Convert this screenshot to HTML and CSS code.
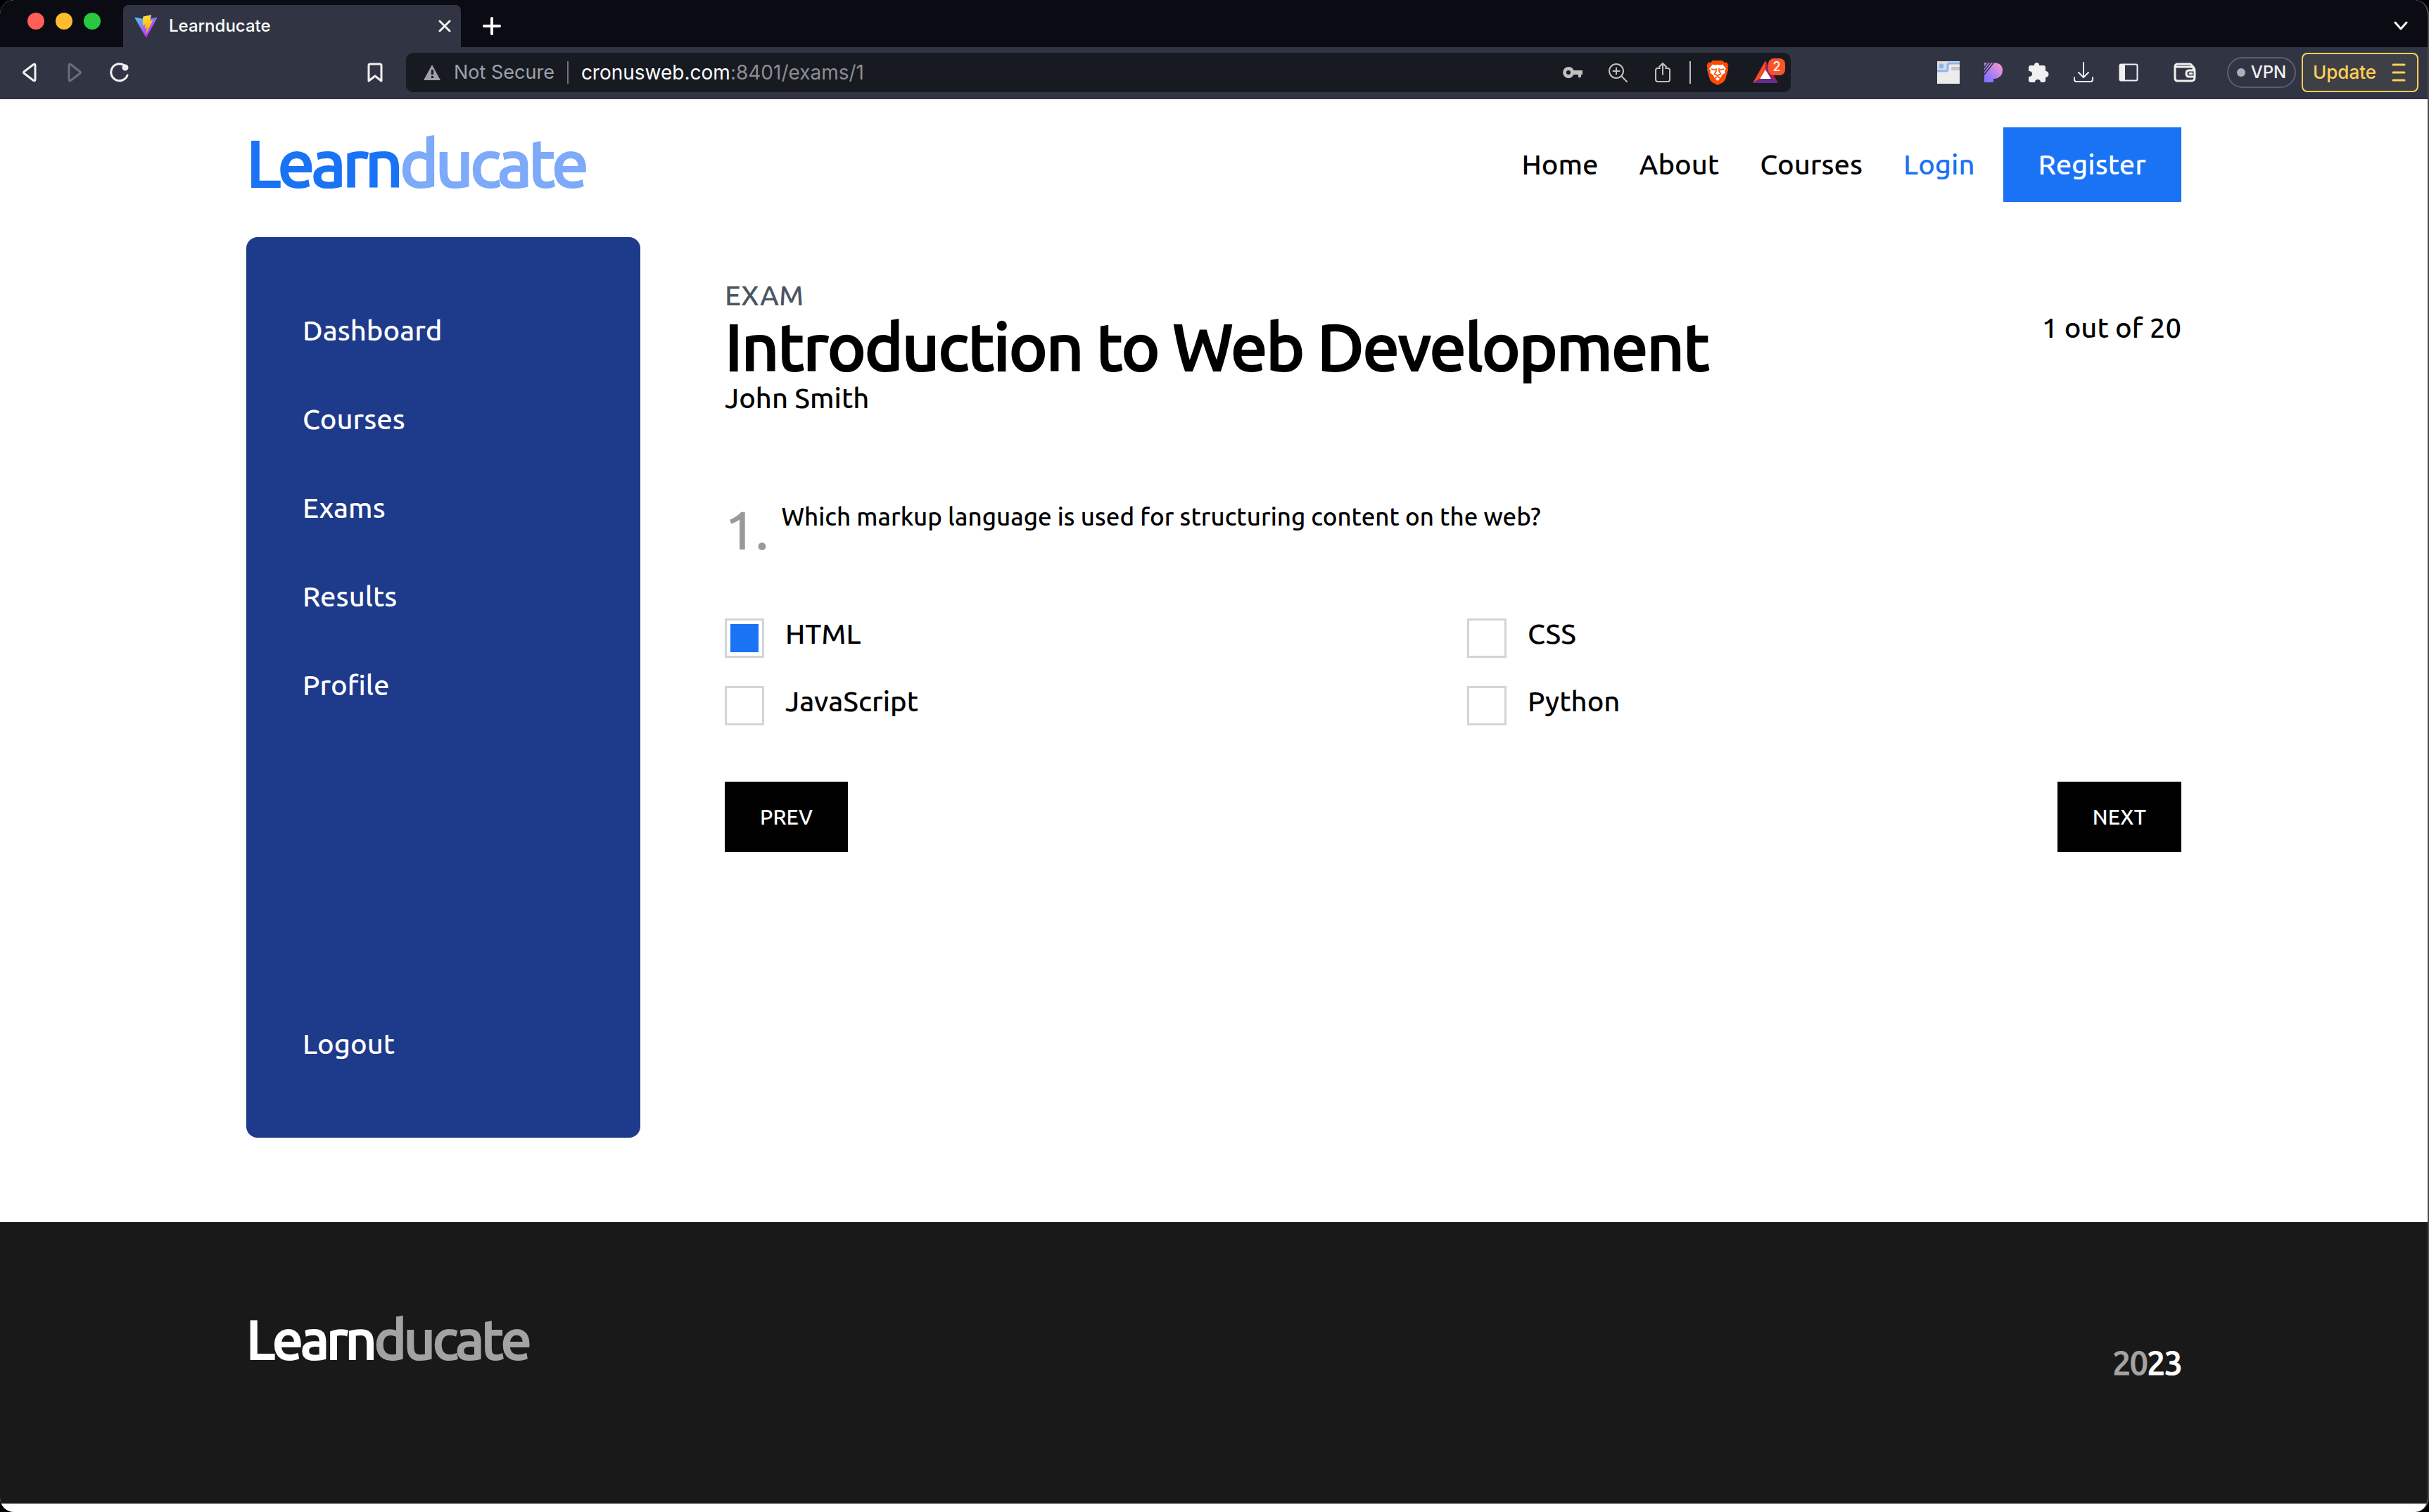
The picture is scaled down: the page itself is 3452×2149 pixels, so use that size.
FILE: index.html
```html
<!DOCTYPE html>
<html lang="en">
<head>
<meta charset="utf-8">
<meta name="viewport" content="width=device-width, initial-scale=1">
<title>Learnducate</title>
<link rel="stylesheet" href="styles.css">
</head>
<body>
<div class="window">
  <div class="browser">
    <div class="tabstrip">
      <div class="lights"><span class="light red"></span><span class="light amber"></span><span class="light green"></span></div>
      <div class="tab">
        <svg class="favicon" viewBox="0 0 410 404" aria-hidden="true">
          <defs>
            <linearGradient id="va" x1="6" y1="33" x2="235" y2="344" gradientUnits="userSpaceOnUse"><stop stop-color="#41D1FF"/><stop offset="1" stop-color="#BD34FE"/></linearGradient>
            <linearGradient id="vb" x1="194" y1="9" x2="236" y2="293" gradientUnits="userSpaceOnUse"><stop stop-color="#FFEA83"/><stop offset=".08" stop-color="#FFDD35"/><stop offset="1" stop-color="#FFA800"/></linearGradient>
          </defs>
          <path fill="url(#va)" d="M399.641 59.5246L215.643 388.545C211.844 395.338 202.084 395.378 198.228 388.618L10.5817 59.5563C6.38087 52.1896 12.6802 43.2665 21.0281 44.7586L205.223 77.6824C206.398 77.8924 207.601 77.8904 208.776 77.6763L389.119 44.8058C397.439 43.2894 403.768 52.1434 399.641 59.5246Z"/>
          <path fill="url(#vb)" d="M292.965 1.5744L156.801 28.2552C154.563 28.6937 152.906 30.5903 152.771 32.8664L144.395 174.33C144.198 177.662 147.258 180.248 150.51 179.498L188.42 170.749C191.967 169.931 195.172 173.055 194.443 176.622L183.18 231.775C182.422 235.487 185.907 238.661 189.532 237.56L212.947 230.446C216.577 229.344 220.065 232.527 219.297 236.242L201.398 322.875C200.278 328.294 207.486 331.249 210.492 326.603L212.5 323.5L323.454 102.072C325.312 98.3645 322.108 94.137 318.036 94.9228L279.014 102.454C275.347 103.161 272.227 99.746 273.262 96.1583L298.731 7.86689C299.767 4.27314 296.636 0.855181 292.965 1.5744Z"/>
        </svg>
        <span class="tab-title">Learnducate</span>
        <button class="icon-btn tab-close" aria-label="Close tab"><svg width="18" height="18" viewBox="0 0 18 18" class="line"><path d="M2 2l14 14M16 2L2 16"/></svg></button>
      </div>
      <button class="icon-btn new-tab" aria-label="New tab"><svg width="26" height="26" viewBox="0 0 26 26" class="line bold"><path d="M13 2v22M2 13h22"/></svg></button>
      <button class="icon-btn tab-list" aria-label="Search tabs"><svg width="20" height="14" viewBox="0 0 20 14" class="line"><path d="M2 2l8 9 8-9"/></svg></button>
    </div>

    <div class="toolbar">
      <div class="cells">
        <button class="icon-btn cell" aria-label="Back"><svg width="28" height="28" viewBox="0 0 28 28" class="line"><path d="M22 4v20q0 3-3 1L6 15q-1-1 0-2L19 3q3-2 3 1z"/></svg></button>
        <button class="icon-btn cell dim" aria-label="Forward"><svg width="28" height="28" viewBox="0 0 28 28" class="line"><path d="M6 4v20q0 3 3 1l13-10q1-1 0-2L9 3Q6 1 6 4z"/></svg></button>
        <button class="icon-btn cell" aria-label="Reload"><svg width="28" height="28" viewBox="0 0 28 28" class="line"><path d="M25 18A12 12 0 1 1 22 5"/><circle cx="22" cy="7" r="3" fill="currentColor"/></svg></button>
      </div>
      <button class="icon-btn cell bookmark" aria-label="Bookmark this page"><svg width="22" height="28" viewBox="0 0 22 28" class="line"><path d="M2 4q0-2 2-2h14q2 0 2 2v22l-9-7-9 7z"/></svg></button>

      <div class="address">
        <svg width="26" height="24" viewBox="0 0 26 24" fill="#9da1ab" aria-hidden="true"><path d="M13 1l12 22H1z"/><path fill="#171a21" d="M12 8h3v7h-3zM12 17h3v3h-3z"/></svg>
        <span class="security">Not Secure</span>
        <span class="rule"></span>
        <button class="url"><span class="host">cronusweb.com</span>:8401/exams/1</button>
        <div class="cells address-icons">
          <button class="icon-btn cell" aria-label="Passwords"><svg width="28" height="18" viewBox="0 0 28 18"><path fill="currentColor" fill-rule="evenodd" d="M8 1a8 8 0 1 0 7.500 11H22v4h4v-4h2V6H15.500A8 8 0 0 0 8 1zm0 5a3 3 0 1 1 0 6 3 3 0 0 1 0-6z"/></svg></button>
          <button class="icon-btn cell" aria-label="Zoom"><svg width="28" height="28" viewBox="0 0 28 28" class="line thin"><circle cx="12" cy="12" r="10"/><path d="M19 19l8 8M7.500 12h9M12 7.500v9"/></svg></button>
          <button class="icon-btn cell" aria-label="Share"><svg width="24" height="30" viewBox="0 0 24 30" class="line thin"><path d="M8 9H5q-3 0-3 3v13q0 3 3 3h14q3 0 3-3V12q0-3-3-3h-3M12 18V2M7 7l5-5 5 5"/></svg></button>
          <span class="rule short"></span>
          <button class="icon-btn cell" aria-label="Brave Shields"><svg width="32" height="36" viewBox="0 0 32 36"><path fill="#fb4c05" d="M9 1h14l3 3 3-.5 2.500 4.500-1 3 .500 3-4 14-3 4-8 4-8-4-3-4-4-14 .500-3-1-3L3 3.500 6 4z"/><path fill="#fff" d="M9 6.500l4 1 3-.8 3 .8 4-1 5 6-2 3 .8 3-5 3.500-.8 3L16 30l-5-5-.8-3-5-3.500.8-3-2-3z"/><path fill="none" stroke="#fb4c05" stroke-width="1.600" d="M7 13l6 1.500M25 13l-6 1.500M14 12v4l-2.500 4 4.500 2.500 4.500-2.500-2.500-4v-4M12 26.500l4-3 4 3"/></svg></button>
          <button class="icon-btn cell rewards" aria-label="Brave Rewards"><svg width="64" height="56" viewBox="0 0 64 56"><path fill="#ff4724" d="M36 11v13L28 37l-10 6z"/><path fill="#9e1f63" d="M36 11v13l8 13 10 6z"/><path fill="#662d91" d="M18 43h36l-10-6H28z"/><path fill="#fff" d="M36 24l8 13H28z"/></svg><span class="badge">2</span></button>
        </div>
      </div>

      <div class="cells extensions">
        <button class="icon-btn cell" aria-label="Page layout extension"><svg width="32" height="32" viewBox="0 0 32 32"><path fill="#ececec" d="M0 0h32v32H0z"/><path fill="#dcdcdc" d="M0 0h32v3H18L14 15H0z"/><path fill="none" stroke="#8ab4f8" stroke-width="3" d="M0 14h12q3 0 3-3V6q0-3 3-3h14"/><circle cx="6" cy="7" r="3.500" fill="#8ab4f8"/><rect x="20" y="8" width="14" height="5" rx="2.500" fill="#c4c4c4"/></svg></button>
        <button class="icon-btn cell" aria-label="Pesticide extension"><svg width="28" height="28" viewBox="0 0 28 28"><defs><linearGradient id="pg" x1="0" y1="1" x2="1" y2="0"><stop offset=".2" stop-color="#8b74ff"/><stop offset="1" stop-color="#ff9dca"/></linearGradient></defs><path fill="url(#pg)" d="M1 0h14q12 1 12 11T16 23h-2v5H1z"/><path fill="none" stroke="#313443" stroke-width="1.600" d="M0 8l7-9M0 13L11-1M1 17L16-2"/></svg></button>
        <button class="icon-btn cell" aria-label="Extensions"><svg width="30" height="30" viewBox="0 0 30 30"><path fill="currentColor" d="M9 5a3.500 4 0 0 1 7 0h6q3 0 3 3v5a4 4 0 0 1 0 9v4q0 3-3 3h-4q0-4-4-4t-4 4H4q-3 0-3-3v-5q5 0 5-4t-5-4V8q0-3 3-3z"/></svg></button>
        <button class="icon-btn cell" aria-label="Downloads"><svg width="30" height="30" viewBox="0 0 30 30" class="line thin"><path d="M15 1v20M8 15l7 7 7-7M2 22v3q0 3 3 3h20q3 0 3-3v-3"/></svg></button>
        <button class="icon-btn cell" aria-label="Sidebar"><svg width="28" height="26" viewBox="0 0 28 26"><rect x="1.500" y="1.500" width="25" height="23" rx="2" fill="none" stroke="currentColor" stroke-width="2"/><path fill="currentColor" d="M1 2h8v22H1z"/></svg></button>
        <button class="icon-btn cell wallet" aria-label="Wallet"><svg width="32" height="28" viewBox="0 0 32 28" class="line"><path d="M2 6q0-4 4-4h18l4 4v4M2 6h22q6 0 6 5v10q0 5-5 5H6q-4 0-4-4zM30 11h-8q-4 0-4 4.500t4 4.500h8M23 15.500h3"/></svg></button>
        <button class="vpn"><span class="dot"></span>VPN</button>
        <button class="update">Update<svg width="20" height="26" viewBox="0 0 20 26" class="line"><path d="M2 2h16M2 13h16M2 24h16"/></svg></button>
      </div>
    </div>
  </div>

  <header class="container site-header">
    <a class="logo" href="#">Learn<span>ducate</span></a>
    <nav class="nav" aria-label="Main">
      <a href="#">Home</a>
      <a href="#">About</a>
      <a href="#">Courses</a>
      <a class="login" href="#">Login</a>
    </nav>
    <a class="register" href="#">Register</a>
  </header>

  <div class="container layout">
    <aside class="sidebar">
      <nav class="side-links" aria-label="Account">
        <a href="#">Dashboard</a>
        <a href="#">Courses</a>
        <a href="#">Exams</a>
        <a href="#">Results</a>
        <a href="#">Profile</a>
        <a class="logout" href="#">Logout</a>
      </nav>
    </aside>

    <main class="exam">
      <div class="exam-head">
        <div>
          <p class="kicker">EXAM</p>
          <h1>Introduction to Web Development</h1>
          <p class="author">John Smith</p>
        </div>
        <p class="progress">1 out of 20</p>
      </div>
      <form>
        <div class="question">
          <span class="number">1.</span>
          <h2 id="question">Which markup language is used for structuring content on the web?</h2>
        </div>
        <div class="options" role="group" aria-labelledby="question">
          <label><input type="checkbox" checked>HTML</label>
          <label><input type="checkbox">CSS</label>
          <label><input type="checkbox">JavaScript</label>
          <label><input type="checkbox">Python</label>
        </div>
        <div class="pager">
          <button type="button">PREV</button>
          <button type="button">NEXT</button>
        </div>
      </form>
    </main>
  </div>

  <footer class="site-footer">
    <div class="container footer-row">
      <a class="logo small" href="#">Learn<span>ducate</span></a>
      <p class="year"><span>20</span>23</p>
    </div>
  </footer>
</div>
</body>
</html>
```
FILE: styles.css
```css
* { box-sizing: border-box; }
html { background: #000; }
body {
  margin: 0;
  font-family: Ubuntu, "Noto Sans", sans-serif;
  font-size: 40px;
  font-weight: 500;
  line-height: 60px;
  color: #000;
}
a { color: inherit; text-decoration: none; }
h1, h2, p { margin: 0; font-weight: 500; }
button { font: inherit; color: inherit; background: none; border: 0; padding: 0; }
svg { display: block; flex: none; }

.window {
  min-height: 100vh;
  background: #fff;
  border-right: 2px solid #4a4a4a;
  border-radius: 20px;
  overflow: hidden;
}

/* Browser frame */
.browser { font: 400 28px/32px Inter, sans-serif; color: #f0f0f0; }
.tabstrip { display: flex; align-items: flex-end; height: 67px; background: #0b0b14; }
.lights { display: flex; gap: 16px; padding: 0 32px 25px 39px; }
.light { width: 24px; height: 24px; border-radius: 50%; }
.red { background: #ff5f57; }
.amber { background: #febc2e; }
.green { background: #28c840; }
.tab {
  display: flex;
  align-items: center;
  gap: 16px;
  width: 480px;
  height: 60px;
  padding: 0 14px 0 16px;
  background: #313443;
  border-radius: 8px 8px 0 0;
}
.favicon { width: 33px; height: 33px; }
.tab-title { font-size: 24px; font-weight: 500; color: #fff; }
.icon-btn { display: flex; align-items: center; justify-content: center; }
.tab-close { margin-left: auto; }
.new-tab { margin-left: 31px; height: 60px; color: #fff; }
.tab-list { margin-left: auto; margin-right: 28px; height: 60px; color: #fff; }
.line { fill: none; stroke: currentColor; stroke-width: 3; stroke-linecap: round; stroke-linejoin: round; }
.bold { stroke-width: 4; }
.thin { stroke-width: 2; }

.toolbar { display: flex; padding: 8px 13px 10px 10px; background: #313443; }
.cells { display: flex; align-items: center; }
.cell { width: 64px; height: 56px; }
.dim { color: #6b6e7a; }
.bookmark { margin: 0 12px 0 299px; }
.address {
  display: flex;
  flex: 1;
  align-items: center;
  gap: 18px;
  padding: 0 8px 0 24px;
  background: #171a21;
  border-radius: 10px;
}
.security { color: #9da1ab; font-size: 27px; }
.rule { width: 2px; height: 32px; background: #6f737c; }
.short { margin: 0 6px; background: #bbb; }
.url { color: #8b8d92; }
.host { color: #fff; }
.address-icons { margin-left: auto; color: #bfbfbf; }
.rewards { position: relative; }
.badge {
  position: absolute;
  top: 8px;
  right: 0;
  width: 24px;
  height: 24px;
  border-radius: 8px;
  background: #fb542b;
  color: #fff;
  font-size: 18px;
  font-weight: 500;
  line-height: 24px;
}
.extensions { margin-left: 192px; }
.wallet { margin: 0 28px 0 16px; }
.vpn {
  display: flex;
  align-items: center;
  justify-content: center;
  gap: 8px;
  width: 98px;
  height: 44px;
  margin-right: 8px;
  border: 2px solid #5c5f70;
  border-radius: 22px;
  font-size: 24px;
  font-weight: 500;
}
.dot { width: 12px; height: 12px; border-radius: 50%; background: #adafc1; }
.update {
  display: flex;
  align-items: center;
  justify-content: space-between;
  width: 166px;
  height: 56px;
  padding: 0 16px 0 14px;
  border: 2px solid #ffd05a;
  border-radius: 8px;
  background: #3f4045;
  color: #ffd05a;
  font-size: 26px;
  font-weight: 500;
}

/* Site */
.container { width: calc(100% - 96px); max-width: 2750px; margin: 0 auto; }
.site-header { display: flex; align-items: center; gap: 40px; padding: 40px 0 50px; }
.logo {
  margin-right: auto;
  padding-bottom: 6px;
  font-size: 94px;
  line-height: 92px;
  letter-spacing: -5px;
  color: #1a73f5;
}
.logo span { color: #7daaf9; }
.logo, .logo span, h1 { -webkit-text-stroke: 2px currentColor; }
.nav { display: flex; gap: 58px; }
.login { color: #1a73f5; }
.register { padding: 23px 50px; background: #1a73f5; color: #fff; }

.layout { display: flex; gap: 120px; padding-bottom: 120px; }
.sidebar {
  display: flex;
  width: 560px;
  min-height: 1280px;
  padding: 70px 80px;
  border-radius: 16px;
  background: #1e3a8a;
  color: #fff;
}
.side-links { display: flex; flex: 1; flex-direction: column; }
.side-links a { padding: 33px 0; }
.side-links .logout { margin-top: auto; }

.exam { flex: 1; padding-top: 53px; }
.exam-head { display: flex; justify-content: space-between; }
.kicker { color: #4b5563; }
h1 { font-size: 93px; line-height: 86px; letter-spacing: -2px; }
.progress { padding-top: 46px; }
.question { display: flex; gap: 18px; margin-top: 117px; }
.number { font-size: 77px; line-height: 80px; color: #999; }
h2 { font-size: 35px; line-height: 42px; }
.options { display: grid; grid-template-columns: 1fr 1fr; gap: 40px; margin-top: 86px; }
.options label { display: flex; gap: 30px; line-height: 44px; }
.options input {
  appearance: none;
  flex: none;
  width: 56px;
  height: 56px;
  margin: 0;
  padding: 5px;
  border: 3px solid #d1d5db;
  background: #fff;
}
.options input:checked { background: #1a73f5 content-box; }
.pager { display: flex; justify-content: space-between; margin-top: 80px; }
.pager button { padding: 20px 50px; background: #000; color: #fff; font-size: 30px; line-height: 60px; }

.site-footer { padding: 120px 0; background: #191919; color: #fff; }
.footer-row { display: flex; align-items: flex-end; height: 160px; padding-bottom: 50px; }
.logo.small { align-self: flex-start; padding: 0; font-size: 78px; letter-spacing: -4px; color: #fff; }
.logo.small span, .year span { color: #a3a3a3; }
.year { font-size: 47px; letter-spacing: -2px; }
.year, .year span { -webkit-text-stroke: 1px currentColor; }
```
